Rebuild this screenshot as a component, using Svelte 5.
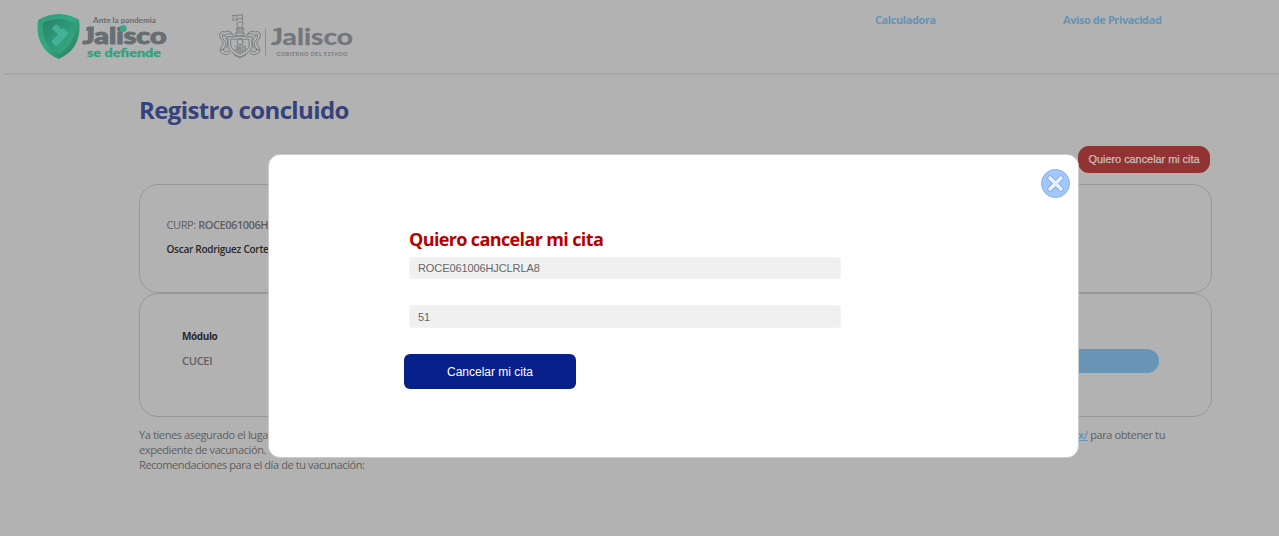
<script>
  let curp = $state('ROCE061006HJCLRLA8');
  let folio = $state('51');
</script>

<div class="page">
  <header>
    <svg class="logo" width="134" height="50" viewBox="36 11 134 50" role="img" aria-label="Jalisco se defiende">
      <defs>
        <linearGradient id="shield" x1="0" y1="0" x2="1" y2="1">
          <stop offset="0" stop-color="#369c7b" />
          <stop offset=".5" stop-color="#32a881" />
          <stop offset="1" stop-color="#29755d" />
        </linearGradient>
        <linearGradient id="inner" x1="0" y1="0" x2="1" y2="1">
          <stop offset="0" stop-color="#278469" />
          <stop offset="1" stop-color="#36ad86" />
        </linearGradient>
      </defs>
      <path d="M58.500 14C65 14 73 16 79 20C81.500 38 75 52 58.500 59C42 52 35.500 38 38 20C44 16 52 14 58.500 14Z" fill="url(#shield)" />
      <path d="M58.500 19C64 19 70 20.500 74.500 23.500C75.500 37 70 48 58.500 54C47 48 41.500 37 43 23.500C47 20.500 53 19 58.500 19Z" fill="url(#inner)" />
      <path d="M51.500 28.500L55.500 24.500L62 29.500L56 35.500Z" fill="#2f9375" />
      <path d="M52.500 29.500Q51.500 28.500 52.500 27.500L55.500 24.700Q56.500 24 57.400 25L61 28.800L64 28.300L68.500 33.500L57.500 45.800Q56.500 46.800 55.500 45.800L51.800 42.300Q51 41.300 52 40.300L58 34.800Z" fill="#43b196" />
      <text x="93" y="23" class="slogan" textLength="63" lengthAdjust="spacingAndGlyphs">Ante la pandemia</text>
      <text x="82.500" y="43.500" class="defiende-name" textLength="84" lengthAdjust="spacingAndGlyphs">Jalisco</text>
      <rect x="86.500" y="27" width="7" height="4" fill="#686f73" />
      <circle cx="123.300" cy="28.600" r="3.400" fill="#32aa82" />
      <text x="87" y="57" class="defiende-sub" textLength="74" lengthAdjust="spacingAndGlyphs">se defiende</text>
    </svg>
    <svg class="logo gob" width="138" height="50" viewBox="217 11 138 50" role="img" aria-label="Gobierno de Jalisco">
      <g fill="none" stroke="#74787b" stroke-width=".85" stroke-linejoin="round" stroke-linecap="round">
        <path d="M242.500 21V15M242 15L232 15.500L234 17.500L232 20H237L239 18.500H242M237 15.500V20" />
        <path d="M237 24Q236 22 240 22Q244 22 243 24Q241 26 243 27Q240 29 237 27Q239 26 237 24ZM236 29H244M237.500 31H242.500M236 33H244V36H236ZM237 28V33M243 28V33" />
        <path d="M228 36.500Q234 38 240 35.500Q246 38 252 36.500V47Q250 53 240 57Q230 53 228 47Z" />
        <path d="M231 39Q236 40 240 38.500Q244 40 249 39V47Q247 51 240 54Q233 51 231 47Z" />
        <circle cx="240" cy="42" r="3" />
        <path d="M235 46H238V50H234M242 46H245L246 50H242M240 45V53M236 48H244M237 51H243" />
        <path d="M234 36Q230 29 225 32Q222 30 219 34Q221 36 220 38Q226 44 221 47Q219 52 223 54Q227 56 230 53" />
        <path d="M233 35Q229 32 226 35Q221 35 223 39Q229 44 223 49Q223 53 229 51" />
        <path d="M226 38Q230 43 226 48M222 34L226 37M220 50L225 49" />
        <path d="M246 36Q250 29 255 32Q258 30 261 34Q259 36 260 38Q254 44 259 47Q261 52 257 54Q253 56 250 53" />
        <path d="M247 35Q251 32 254 35Q259 35 257 39Q251 44 257 49Q257 53 251 51" />
        <path d="M254 38Q250 43 254 48M258 34L254 37M260 50L255 49M234 55L240 58L246 55" />
      </g>
      <path d="M265.500 28.500V55.500" stroke="#8c8e90" />
      <text x="271" y="45.300" class="gob-name" textLength="82" lengthAdjust="spacingAndGlyphs">Jalisco</text>
      <rect x="273.500" y="28.800" width="7" height="2.400" fill="#72777b" />
      <text x="276.500" y="55.600" class="gob-sub" textLength="71" lengthAdjust="spacing">GOBIERNO DEL ESTADO</text>
    </svg>
    <nav>
      <a class="calc" href="#calculadora">Calculadora</a>
      <a class="aviso" href="#aviso">Aviso de Privacidad</a>
    </nav>
  </header>

  <main>
    <h1>Registro concluido</h1>
    <button class="open-cancel">Quiero cancelar mi cita</button>
    <section class="card person">
      <p class="curp">CURP: <b>ROCE061006H</b></p>
      <p class="name">Oscar Rodriguez Corte</p>
    </section>
    <section class="card place">
      <div>
        <p class="label">Módulo</p>
        <p class="value">CUCEI</p>
      </div>
      <div class="pill"></div>
    </section>
    <div class="notes">
      <div class="split"><span>Ya tienes asegurado el luga</span><span><a href="#expediente">x/</a> para obtener tu</span></div>
      <div>expediente de vacunación.</div>
      <div>Recomendaciones para el día de tu vacunación:</div>
    </div>
  </main>

  <div class="modal" role="dialog" aria-labelledby="cancel-title">
    <button class="close" aria-label="Cerrar">
      <svg width="29" height="29" viewBox="0 0 29 29">
        <circle cx="14.500" cy="14.500" r="14" fill="#a2c7ff" stroke="#8caef0" />
        <path d="M9 9L20 20M20 9L9 20" stroke="#84abf0" stroke-width="5.400" stroke-linecap="round" />
        <path d="M9 9L20 20M20 9L9 20" stroke="#e6f0ff" stroke-width="3.700" stroke-linecap="round" />
      </svg>
    </button>
    <form>
      <h2 id="cancel-title">Quiero cancelar mi cita</h2>
      <input bind:value={curp} />
      <input class="second" bind:value={folio} />
      <button type="button" class="submit">Cancelar mi cita</button>
    </form>
  </div>
</div>

<style>
  :global(body) { background: #b2b2b2; overflow: hidden; }
  * { box-sizing: border-box; }
  h1, h2, p { margin: 0; }
  .page {
    position: relative;
    height: 536px;
    overflow: hidden;
    background: #b2b2b2;
    color: #5f5f5f;
    font-family: "Open Sans", "Noto Sans", sans-serif;
    font-size: 11px;
    letter-spacing: -.39px;
    white-space: nowrap;
  }
  header {
    display: flex;
    align-items: flex-start;
    height: 75px;
    margin-left: 5px;
    padding: 11px 0 0 31px;
    border-bottom: 2px solid #a8a8a8;
  }
  .logo { flex: none; letter-spacing: 0; }
  .gob { margin-left: 47px; }
  svg text { font-family: Lato, sans-serif; font-weight: 900; }
  .slogan { font-size: 7px; font-weight: 700; fill: #686d70; }
  .defiende-name { font-size: 22px; fill: #686f73; stroke: #686f73; stroke-width: 1px; }
  .defiende-sub { font-size: 12px; fill: #32a17c; stroke: #32a17c; stroke-width: .3px; }
  .gob-name { font-size: 22.500px; font-weight: 700; fill: #72777b; stroke: #72777b; stroke-width: .3px; }
  .gob-sub { font-size: 5.500px; font-weight: 700; fill: #777b7e; }
  nav { display: flex; margin-left: 520px; gap: 128px; }
  nav a {
    color: #6793b4;
    font-weight: 700;
    line-height: 18px;
    letter-spacing: -.42px;
    text-decoration: none;
  }
  .calc { width: 60px; }
  main { width: 1073px; margin-left: 139px; }
  h1 {
    height: 71px;
    padding-top: 17px;
    color: #36427a;
    font-size: 24px;
    line-height: 36px;
    letter-spacing: -.63px;
  }
  button {
    border: 0;
    padding: 0;
    font-family: "Liberation Sans", Arial, sans-serif;
    letter-spacing: 0;
  }
  .open-cancel {
    display: block;
    width: 132px;
    height: 27px;
    margin: 0 2px 11px auto;
    padding-bottom: 2px;
    border-radius: 11px;
    background: #923333;
    color: #c9bebe;
    font-size: 11px;
    letter-spacing: -.07px;
    -webkit-text-stroke: .25px #c9bebe;
  }
  .card { border: 1px solid #989898; border-radius: 19px; }
  .person { height: 109px; padding: 30px 26.500px; }
  .curp { line-height: 20px; }
  .curp b { font-weight: 600; letter-spacing: -.45px; }
  .name { padding-top: 4px; font-size: 10px; font-weight: 600; line-height: 20px; letter-spacing: -.27px; color: #292929; }
  .place {
    display: flex;
    justify-content: space-between;
    height: 124px;
    padding: 32px 52px 0 42px;
  }
  .label { font-size: 10px; font-weight: 700; line-height: 20px; color: #292929; }
  .value { padding-top: 5px; font-weight: 600; line-height: 20px; letter-spacing: -.25px; }
  .pill { width: 180px; height: 24px; margin-top: 23px; border-radius: 12px; background: #6996b6; }
  .notes { padding: 10px 47px 0 0; line-height: 15px; }
  .split { display: flex; justify-content: space-between; }
  .notes a { color: #6793b4; font-weight: 600; }
  .modal {
    position: absolute;
    left: 268px;
    top: 154px;
    width: 811px;
    height: 304px;
    border: 1px solid #ccc;
    border-radius: 12px;
    background: #fff;
  }
  .close {
    position: absolute;
    right: 8px;
    top: 14px;
    width: 29px;
    height: 29px;
    background: none;
  }
  .close svg { display: block; }
  form { display: flex; flex-direction: column; align-items: flex-start; padding: 72px 0 0 140px; }
  h2 { height: 30px; color: #b60000; font-size: 18px; line-height: 25px; letter-spacing: -.63px; }
  input {
    width: 432px;
    height: 22px;
    padding: 0 8px;
    border: 1px solid #f3f3f3;
    border-radius: 3px;
    background: #f0f0f0;
    color: #666;
    font: 11px "Liberation Sans", Arial, sans-serif;
    letter-spacing: -.1px;
  }
  .second { height: 23px; margin-top: 26px; }
  .submit {
    width: 172px;
    height: 35px;
    margin: 26px 0 0 -5px;
    border-radius: 6px;
    background: #08208a;
    color: #fff;
    font-size: 12px;
  }
</style>
